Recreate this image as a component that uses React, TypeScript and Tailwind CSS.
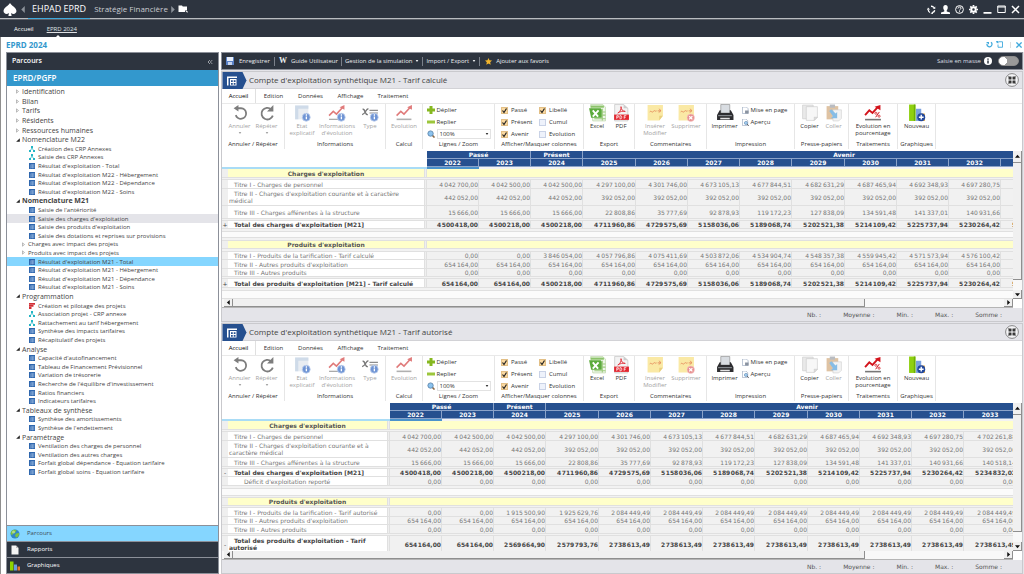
import React from 'react';
import { ChevronsLeft } from 'lucide-react';

type TreeRow = { label: string; kind: 'closed' | 'open' | 'table' | 'nodes' | 'chart' | 'sub'; tone?: 'bold' | 'hover' | 'active' };

const tree: TreeRow[] = [
  { label: 'Identification', kind: 'closed' },
  { label: 'Bilan', kind: 'closed' },
  { label: 'Tarifs', kind: 'closed' },
  { label: 'Résidents', kind: 'closed' },
  { label: 'Ressources humaines', kind: 'closed' },
  { label: 'Nomenclature M22', kind: 'open' },
  { label: 'Création des CRP Annexes', kind: 'nodes' },
  { label: 'Saisie des CRP Annexes', kind: 'nodes' },
  { label: "Résultat d'exploitation - Total", kind: 'table' },
  { label: "Résultat d'exploitation M22 - Hébergement", kind: 'table' },
  { label: "Résultat d'exploitation M22 - Dépendance", kind: 'table' },
  { label: "Résultat d'exploitation M22 - Soins", kind: 'table' },
  { label: 'Nomenclature M21', kind: 'open', tone: 'bold' },
  { label: "Saisie de l'antériorité", kind: 'table' },
  { label: "Saisie des charges d'exploitation", kind: 'table', tone: 'hover' },
  { label: "Saisie des produits d'exploitation", kind: 'table' },
  { label: 'Saisie des dotations et reprises sur provisions', kind: 'table' },
  { label: 'Charges avec impact des projets', kind: 'sub' },
  { label: 'Produits avec impact des projets', kind: 'sub' },
  { label: "Résultat d'exploitation M21 - Total", kind: 'table', tone: 'active' },
  { label: "Résultat d'exploitation M21 - Hébergement", kind: 'table' },
  { label: "Résultat d'exploitation M21 - Dépendance", kind: 'table' },
  { label: "Résultat d'exploitation M21 - Soins", kind: 'table' },
  { label: 'Programmation', kind: 'open' },
  { label: 'Création et pilotage des projets', kind: 'chart' },
  { label: 'Association projet - CRP annexe', kind: 'nodes' },
  { label: 'Rattachement au tarif hébergement', kind: 'nodes' },
  { label: 'Synthèse des impacts tarifaires', kind: 'table' },
  { label: 'Récapitulatif des projets', kind: 'table' },
  { label: 'Analyse', kind: 'open' },
  { label: "Capacité d'autofinancement", kind: 'table' },
  { label: 'Tableau de Financement Prévisionnel', kind: 'table' },
  { label: 'Variation de trésorerie', kind: 'table' },
  { label: "Recherche de l'équilibre d'investissement", kind: 'table' },
  { label: 'Ratios financiers', kind: 'table' },
  { label: 'Indicateurs tarifaires', kind: 'table' },
  { label: 'Tableaux de synthèse', kind: 'open' },
  { label: 'Synthèse des amortissements', kind: 'table' },
  { label: "Synthèse de l'endettement", kind: 'table' },
  { label: 'Paramétrage', kind: 'open' },
  { label: 'Ventilation des charges de personnel', kind: 'table' },
  { label: 'Ventilation des autres charges', kind: 'table' },
  { label: 'Forfait global dépendance - Equation tarifaire', kind: 'table' },
  { label: 'Forfait global soins - Equation tarifaire', kind: 'table' },
];

function TreeIcon({ kind }: { kind: TreeRow['kind'] }) {
  if (kind === 'closed' || kind === 'sub')
    return (
      <svg viewBox="0 0 4 6" className="h-[5px] w-[3px]" fill="none" stroke="#8a8a8a" strokeWidth="0.8">
        <path d="M.6.8 3.3 3 .6 5.2z" />
      </svg>
    );
  if (kind === 'open')
    return (
      <svg viewBox="0 0 5 5" className="h-1 w-1">
        <path d="M4.8.3v4.4H.2z" fill="#222" />
      </svg>
    );
  if (kind === 'nodes')
    return (
      <svg viewBox="0 0 12 12" className="h-[6px] w-[6px]" fill="#23b5c4">
        <path d="M4 0h4v4H4zM0 8h4v4H0zM8 8h4v4H8zM5.3 4h1.4l2.6 4H8L6 5.5 4 8H2.700z" />
      </svg>
    );
  if (kind === 'chart')
    return (
      <svg viewBox="0 0 12 12" className="h-[6px] w-[6px]" fill="#d22f36">
        <path d="M0 0h12v3.500H0zM0 4h9v3.500H0zM0 8h5v4H0z" />
      </svg>
    );
  return (
    <svg viewBox="0 0 12 12" className="h-[6px] w-[6px]">
      <path d="M0 0h12v12H0z" fill="#2f67ae" />
      <path d="M4 3.500h7M4 6h7M4 8.500h7M3.500 3v8M7.500 3v8" stroke="#b9d2ef" strokeWidth="0.9" />
    </svg>
  );
}

function Sidebar() {
  return (
    <aside className="flex w-[213px] shrink-0 flex-col border border-[#8c9099] bg-white">
      <div className="flex h-[17px] shrink-0 items-center justify-between bg-[#2d343f] pl-[5px] pr-1 text-[7px] font-semibold text-white">
        Parcours
        <button aria-label="Réduire le panneau" className="text-[#d5d8dc]">
          <ChevronsLeft size={8} strokeWidth={2} />
        </button>
      </div>
      <h2 className="flex h-4 shrink-0 items-center bg-[#3398cd] pl-[6px] text-[8px] font-semibold text-white">EPRD/PGFP</h2>
      <nav className="min-h-0 flex-1 overflow-hidden pt-px">
        <ul className="flex h-[389px] flex-col">
          {tree.map((r) => {
            const leaf = r.kind === 'table' || r.kind === 'nodes' || r.kind === 'chart';
            const pad = leaf ? 'flex-[9] pl-[22px] text-[6px]' : r.kind === 'sub' ? 'flex-[9] pl-[15px] text-[6px]' : 'flex-[10] pl-[9px] text-[7px]';
            const tone =
              r.tone === 'active' ? 'bg-[#85d6ff]' : r.tone === 'hover' ? 'bg-[#e4e4e9]' : r.tone === 'bold' ? 'font-bold text-[#222]' : '';
            return (
              <li key={r.label} className={`flex min-h-0 items-center text-[#444] ${pad} ${tone}`}>
                <button className="flex items-center leading-none whitespace-nowrap">
                  <span className={leaf ? 'w-[9px]' : 'w-[6px]'}>
                    <TreeIcon kind={r.kind} />
                  </span>
                  {r.label}
                </button>
              </li>
            );
          })}
        </ul>
      </nav>
      <div className="flex shrink-0 flex-col text-[6px] text-white">
        <button className="flex h-4 items-center gap-[7px] border-t border-[#8c9099] bg-[#85d6ff] pl-[3px] text-[#3c4a55]">
          <svg viewBox="0 0 20 20" className="h-[10px] w-[10px]">
            <circle cx="10" cy="10" r="9" fill="#2f86c9" />
            <path d="M3 4c4-4 9-3 10-1l-3 5-4 1-2 4-3-4zM12 9l6-1c1 5-3 9-6 9l-2-4z" fill="#7cc142" />
            <circle cx="7" cy="6" r="3" fill="#fff" opacity=".4" />
          </svg>
          Parcours
        </button>
        <button className="flex h-4 items-center gap-[7px] border-t border-[#8c9099] bg-[#2d343f] pl-[3px]">
          <svg viewBox="0 0 20 20" className="h-[10px] w-[10px]">
            <path d="M3 1h9l5 5v13H3z" fill="#f4f4f4" />
            <path d="M12 1v5h5z" fill="#bbb" />
          </svg>
          Rapports
        </button>
        <button className="flex h-4 items-center gap-[7px] border-t border-[#8c9099] bg-[#2d343f] pl-[3px]">
          <svg viewBox="0 0 20 20" className="h-[10px] w-[10px]">
            <path d="M0 1h7v18H0z" fill="#8fd400" />
            <path d="M8 7h6v12H8z" fill="#6a9be0" />
            <path d="M15 11h5v8h-5z" fill="#e8762c" />
          </svg>
          Graphiques
        </button>
      </div>
    </aside>
  );
}

function TitleBar() {
  return (
    <header className="shrink-0 bg-[#2d343f] text-white">
      <div className="flex h-[19px] items-center border-b border-[#b9bcc0] px-[3px]">
        <svg viewBox="0 0 26 24" className="h-[13px] w-[14px]" fill="#fff">
          <path d="M13 0c3 5 12 9 12 15 0 5-6 7-10 3.500L16 24h-6l1-5.500C7 22 1 20 1 15 1 9 10 5 13 0z" />
        </svg>
        <svg viewBox="0 0 4 8" className="ml-1 h-[7px] w-1" fill="#8d939b">
          <path d="M4 0v8L0 4z" />
        </svg>
        <div className="ml-[3px] flex h-[19px] items-center border-b border-[#3fa9dc] px-1 text-[9px]">EHPAD EPRD</div>
        <span className="ml-1 text-[8px] text-[#c9ccd1]">Stratégie Financière</span>
        <svg viewBox="0 0 4 8" className="ml-[3px] h-[7px] w-1" fill="#8d939b">
          <path d="M0 0v8l4-4z" />
        </svg>
        <button aria-label="Dossiers" className="ml-[3px]">
          <svg viewBox="0 0 18 16" className="h-2 w-[10px]" fill="#fff">
            <path d="M0 1h7l1.500 2H17v8h-4v3H0z" />
            <path d="M14 12h4v4z" />
          </svg>
        </button>
        <div className="ml-auto flex items-center gap-[5px] pr-px">
          <button aria-label="Synchroniser">
            <svg viewBox="0 0 18 18" className="h-[9px] w-[9px]" fill="none" stroke="#fff" strokeWidth="2.600">
              <path d="M8 2.500a6.500 6.500 0 0 1 6 3M15.500 10.500a6.500 6.500 0 0 1-4 4.500M6 15A6.500 6.500 0 0 1 2.500 10" />
              <path d="M0 10l2-5 4 4zM16.500 3v5l-5-1zM7 17l5-4 0 5z" fill="#fff" stroke="none" />
            </svg>
          </button>
          <button aria-label="Utilisateur">
            <svg viewBox="0 0 18 18" className="h-[9px] w-[9px]" fill="#fff">
              <path d="M9 0c3 0 4.500 2 4.500 5s-1 4-2 5.500V13l6.500 2v3H0v-3l6.500-2v-2.500C5.500 9 4.500 8 4.500 5S6 0 9 0z" />
            </svg>
          </button>
          <button aria-label="Aide">
            <svg viewBox="0 0 18 18" className="h-[9px] w-[9px]" fill="none" stroke="#fff" strokeWidth="2">
              <circle cx="9" cy="9" r="7.800" />
              <path d="M6 7c0-4 6-4 6-.5 0 2-3 2-3 4.500M9 12.500v2" />
            </svg>
          </button>
          <button aria-label="Paramètres">
            <svg viewBox="0 0 18 18" className="h-[9px] w-[9px]" fill="none" stroke="#fff">
              <circle cx="9" cy="9" r="4.500" strokeWidth="4" />
              <path d="M9 0v3M9 15v3M0 9h3M15 9h3M2.600 2.600l2 2M13.400 13.400l2 2M2.600 15.400l2-2M13.400 4.600l2-2" strokeWidth="3.400" />
            </svg>
          </button>
          <button aria-label="Réduire">
            <svg viewBox="0 0 18 18" className="h-[9px] w-[9px]">
              <path d="M1 14h16v3.500H1z" fill="#fff" />
            </svg>
          </button>
          <button aria-label="Agrandir">
            <svg viewBox="0 0 18 18" className="h-[9px] w-[9px]" fill="none" stroke="#fff" strokeWidth="2">
              <path d="M1.500 2h15v13h-15zM1 4h16" />
            </svg>
          </button>
          <button aria-label="Fermer">
            <svg viewBox="0 0 18 18" className="h-[9px] w-[9px]" stroke="#fff" strokeWidth="3">
              <path d="M2 2l14 14M16 2 2 16" />
            </svg>
          </button>
        </div>
      </div>
      <nav className="flex h-[18px] gap-[13px] border-t border-[#5b6068] pl-[14px] text-[6px]">
        <a href="#accueil" className="pt-1 leading-[11px]">Accueil</a>
        <a href="#eprd" className="flex flex-col items-center justify-between pt-1 leading-[11px] text-[#dfe1e4] underline">
          EPRD 2024
          <svg viewBox="0 0 6 3" className="-ml-2 h-[2px] w-[6px]" fill="#fff">
            <path d="M0 3 3 0l3 3z" />
          </svg>
        </a>
      </nav>
    </header>
  );
}

function Caret() {
  return (
    <svg viewBox="0 0 4 3" className="h-[2px] w-1" fill="currentColor">
      <path d="M0 0h4L2 3z" />
    </svg>
  );
}

function Toolbar() {
  return (
    <div className="flex h-[18px] shrink-0 items-center border border-[#8c9099] bg-[#2d343f] pl-1 pr-[3px] text-[6px] text-[#eceef0]">
      <button className="flex items-center gap-[5px] pr-1">
        <svg viewBox="0 0 16 16" className="h-2 w-2">
          <path d="M0 0h16v16H0z" fill="#5b83c8" />
          <path d="M2 0h12v8H2z" fill="#e8effa" />
          <path d="M4 10h8v6H4z" fill="#c6d4ee" />
        </svg>
        Enregistrer
      </button>
      <button className="flex items-center gap-1 border-l border-[#7a808a] pr-[3px] pl-1">
        <span className="font-['Liberation_Serif',serif] text-[8px] leading-none font-bold">W</span>
        Guide Utilisateur
      </button>
      <button className="flex items-center gap-[3px] border-l border-[#7a808a] px-[3px]">
        Gestion de la simulation <Caret />
      </button>
      <button className="flex items-center gap-[3px] border-l border-[#7a808a] px-[3px]">
        Import / Export <Caret />
      </button>
      <button className="flex items-center gap-[4px] border-l border-[#7a808a] pl-[5px]">
        <svg viewBox="0 0 20 20" className="h-[7px] w-[7px]" fill="#f3b52c">
          <path d="M10 0l3 6.500 7 .8-5.200 4.700L16.300 19 10 15.500 3.700 19l1.500-7L0 7.300l7-.8z" />
        </svg>
        Ajouter aux favoris
      </button>
      <label className="ml-auto flex items-center gap-[3px] text-[#dcdee1]">
        Saisie en masse
        <svg viewBox="0 0 16 16" className="h-2 w-2">
          <circle cx="8" cy="8" r="8" fill="#fff" />
          <path d="M6.500 7h3v6h-3zM6.500 3h3v2.500h-3z" fill="#2d343f" />
        </svg>
        <input
          type="checkbox"
          role="switch"
          className="ml-[3px] h-[10px] w-[21px] appearance-none rounded-full border border-[#8d8d8d] bg-[radial-gradient(circle_at_4px_4px,#fff_4px,#9a9a9a_4px)]"
        />
      </label>
    </div>
  );
}

function InfoDot() {
  return (
    <g>
      <circle cx="25" cy="25" r="7.500" fill="#6f94d4" stroke="#c2d3ee" strokeWidth="1.500" />
      <path d="M24 23.500h2.500V29H24zM24 19.500h2.500V22H24z" fill="#fff" />
    </g>
  );
}

function RibbonIcon({ name }: { name: string }) {
  const cls = 'h-[18px] w-[18px]';
  switch (name) {
    case 'undo':
      return (
        <svg viewBox="0 0 34 34" className={cls} fill="none" stroke="#7d7d7d" strokeWidth="3.400">
          <path d="M10 8h9a10 10 0 1 1-10 13" />
          <path d="M14 2v12L5 8z" fill="#7d7d7d" stroke="none" />
        </svg>
      );
    case 'redo':
      return (
        <svg viewBox="0 0 34 34" className={cls} fill="none" stroke="#7d7d7d" strokeWidth="3.400">
          <path d="M25 10a11 11 0 1 0 3 12" />
          <path d="M29 2v12H17z" fill="#7d7d7d" stroke="none" />
        </svg>
      );
    case 'state':
      return (
        <svg viewBox="0 0 34 34" className={cls}>
          <path d="M4 3h25v26H4z" fill="#e9edf2" />
          <path d="M4 3h25v6H4zM4 9h6v20H4z" fill="#cfdbe9" />
          <InfoDot />
        </svg>
      );
    case 'trendInfo':
      return (
        <svg viewBox="0 0 34 34" className={cls}>
          <path d="M2 29h20" stroke="#aaa" strokeWidth="2.500" />
          <path d="M2 22l8-8 6 5L27 7" fill="none" stroke="#e07b7b" strokeWidth="3" />
          <path d="M31 2v9l-9-5z" fill="#e07b7b" />
          <InfoDot />
        </svg>
      );
    case 'type':
      return (
        <svg viewBox="0 0 34 34" className={cls}>
          <path d="M3 10c5-2 4 12 10 10M14 9C9 9 8 20 2 20" fill="none" stroke="#777" strokeWidth="2.600" />
          <path d="M16 12h16M16 17h16" stroke="#8c8c8c" strokeWidth="2" />
          <InfoDot />
        </svg>
      );
    case 'trend':
      return (
        <svg viewBox="0 0 34 34" className={cls}>
          <path d="M3 29h28" stroke="#b0b0b0" strokeWidth="3" />
          <path d="M3 22l8-8 6 5L28 7" fill="none" stroke="#e07b7b" strokeWidth="3" />
          <path d="M32 2v9l-9-5z" fill="#e07b7b" />
        </svg>
      );
    case 'excel':
      return (
        <svg viewBox="0 0 34 34" className={cls}>
          <path d="M5 1h23l5 5v26H9z" fill="#eef6e8" stroke="#a9cc90" />
          <path d="M5 3h25v4H5z" fill="#8cc36a" />
          <path d="M27 9v22M27 15h6M27 21h6M12 28h21" stroke="#9cca7c" strokeWidth="2" />
          <path d="M2 8h22l2 3v15H6z" fill="#5cab3c" />
          <path d="M9 12l10 12M20 12 9 24" stroke="#fff" strokeWidth="3.600" />
        </svg>
      );
    case 'pdf':
      return (
        <svg viewBox="0 0 34 34" className={cls}>
          <path d="M5 1h17l8 7v24H5z" fill="#f3f3f3" stroke="#b5b5b5" />
          <path d="M22 1v7h8z" fill="#ccc" />
          <path d="M11 17c5-3 7-8 6-12 0 5 3 9 8 9-5-1-9 0-14 3z" fill="none" stroke="#e2343c" strokeWidth="1.800" />
          <path d="M4 20h28v10H4z" fill="#e2262f" />
          <path d="M9 28v-6h3v3H9M15 22v6h2c2 0 2-6 0-6zM27 22h-4v6M23 25h3" fill="none" stroke="#fff" strokeWidth="1.400" />
        </svg>
      );
    case 'note':
    case 'noteDelete':
      return (
        <svg viewBox="0 0 34 34" className={cls}>
          <path d="M3 2h29v20l-7 9H3z" fill="#fae9a5" />
          <path d="M25 31v-9h7z" fill="#e8cf7e" />
          <path d="M7 15c3-4 4 3 7-1s4 2 6-1M22 13h6M25 9l3 4-4 3" fill="none" stroke="#e5905f" strokeWidth="1.800" />
          {name === 'noteDelete' && (
            <g>
              <circle cx="26" cy="26" r="7" fill="#e89090" stroke="#f6cccc" />
              <path d="M23 23l6 6M29 23l-6 6" stroke="#fff" strokeWidth="2.400" />
            </g>
          )}
        </svg>
      );
    case 'print':
      return (
        <svg viewBox="0 0 34 34" className={cls}>
          <path d="M9 1h17v16H9z" fill="#d9dde2" stroke="#777" />
          <path d="M7 12h2v5h17v-5h2l5 9v9H2v-9z" fill="#2d2d30" />
          <path d="M4 21h26v2H4z" fill="#8f9499" />
          <path d="M8 26h18v3H8z" fill="#e3e3e3" />
        </svg>
      );
    case 'copy':
      return (
        <svg viewBox="0 0 34 34" className={cls} stroke="#c4c4c4">
          <path d="M3 2h20v26H3z" fill="#e9e9e9" />
          <path d="M10 5h21v20l-6 6H10z" fill="#f7f7f7" />
          <path d="M25 31v-6h6z" fill="#ddd" />
        </svg>
      );
    case 'paste':
      return (
        <svg viewBox="0 0 34 34" className={cls}>
          <path d="M3 4h22v25H3z" fill="#dfc3a3" />
          <path d="M9 1h10v6H9z" fill="#b9bcc1" />
          <path d="M15 11h16v16l-5 5H15z" fill="#f3f3f3" stroke="#c9c9c9" />
          <path d="M8 13l4-3 8 8 3-3v12H11l4-4z" fill="#87bde6" />
        </svg>
      );
    case 'percent':
      return (
        <svg viewBox="0 0 34 34" className={cls}>
          <path d="M2 28h30v3H2z" fill="#777" />
          <path d="M2 21l8-9 6 5L26 6" fill="none" stroke="#d3141c" strokeWidth="3.600" />
          <path d="M31 2v10L20 5z" fill="#d3141c" />
          <path d="M29 15l-7 10" stroke="#d3141c" strokeWidth="1.800" />
          <circle cx="22.500" cy="17.500" r="2" fill="none" stroke="#d3141c" strokeWidth="1.400" />
          <circle cx="28.500" cy="23" r="2" fill="none" stroke="#d3141c" strokeWidth="1.400" />
        </svg>
      );
    default:
      return (
        <svg viewBox="0 0 34 34" className={cls}>
          <path d="M2 1h12v31H2z" fill="#8fd010" />
          <path d="M11 1h3v31h-3z" fill="#6cae08" />
          <path d="M15 9h10v23H15z" fill="#7ba2e0" />
          <path d="M26 18h6v14h-6z" fill="#f0b040" />
          <circle cx="25" cy="25" r="7.500" fill="#22489c" />
          <path d="M25 20.500v9M20.500 25h9" stroke="#fff" strokeWidth="2.600" />
        </svg>
      );
  }
}

function BigButton({ icon, label, disabled, wide, caret }: { icon: string; label: string; disabled?: boolean; wide: string; caret?: boolean }) {
  return (
    <button disabled={disabled} className={`flex flex-col items-center justify-start ${wide} ${disabled ? 'text-[#a3a3a3]' : 'text-[#333]'}`}>
      <RibbonIcon name={icon} />
      <span className="mt-px leading-[7px] whitespace-pre-line">{label}</span>
      {caret && <span className="mt-[2px]"><Caret /></span>}
    </button>
  );
}

function Group({ title, width, children }: { title: string; width: string; children: React.ReactNode }) {
  return (
    <section className={`flex shrink-0 flex-col border-r border-[#e6e6e6] ${width}`}>
      <div className="flex flex-1 justify-center">{children}</div>
      <h3 className="text-center leading-[9px] whitespace-nowrap text-[#333]">{title}</h3>
    </section>
  );
}

function Check({ label, on }: { label: string; on?: boolean }) {
  return (
    <label className="flex h-3 items-center gap-[3px]">
      <span className="grid">
        <input
          type="checkbox"
          defaultChecked={on}
          className="col-start-1 row-start-1 h-[7px] w-[7px] appearance-none border border-[#c9d2e6] bg-[#eef2fb] checked:border-[#e2bf86] checked:bg-[#fbd9a0]"
        />
        {on && (
          <svg viewBox="0 0 14 14" className="pointer-events-none col-start-1 row-start-1 h-[7px] w-[7px]" fill="none" stroke="#222" strokeWidth="2.400">
            <path d="M3 7l3 4 5-8" />
          </svg>
        )}
      </span>
      {label}
    </label>
  );
}

function Ribbon() {
  return (
    <div className="flex h-[48px] shrink-0 border-t border-[#e9e9e9] bg-white pb-[2px] text-[6px] text-[#333]">
      <Group title="Annuler / Répéter" width="w-[63px]">
        <BigButton icon="undo" label="Annuler" disabled caret wide="w-[27px]" />
        <BigButton icon="redo" label="Répéter" disabled caret wide="w-[27px]" />
      </Group>
      <Group title="Informations" width="w-[101px]">
        <BigButton icon="state" label={'Etat\nexplicatif'} disabled wide="w-[30px]" />
        <BigButton icon="trendInfo" label={"Informations\nd'évolution"} disabled wide="w-[40px]" />
        <BigButton icon="type" label="Type" disabled wide="w-[26px]" />
      </Group>
      <Group title="Calcul" width="w-[37px]">
        <BigButton icon="trend" label="Evolution" disabled wide="w-[32px]" />
      </Group>
      <Group title="Lignes / Zoom" width="w-[72px]">
        <div className="flex w-[64px] flex-col">
          <button className="flex h-3 items-center gap-[2px]">
            <svg viewBox="0 0 16 16" className="h-2 w-2">
              <path d="M5 0h6v5h5v6h-5v5H5v-5H0V5h5z" fill="#86b820" />
            </svg>
            Déplier
          </button>
          <button className="flex h-3 items-center gap-[2px]">
            <svg viewBox="0 0 16 16" className="h-2 w-2">
              <path d="M0 5h16v6H0z" fill="#9cc63c" />
            </svg>
            Replier
          </button>
          <label className="flex h-3 items-center gap-[2px]">
            <svg viewBox="0 0 18 18" className="h-2 w-2 shrink-0">
              <path d="M11 11l6 6" stroke="#8a6a4a" strokeWidth="3.500" />
              <circle cx="8" cy="8" r="6" fill="#8cc3ee" stroke="#5d86ad" strokeWidth="2" />
            </svg>
            <span className="grid flex-1 items-center">
              <select aria-label="Zoom" className="col-start-1 row-start-1 h-[10px] w-full appearance-none border border-[#e2e2e2] bg-white pl-[2px] leading-none">
                <option>100%</option>
              </select>
              <span className="pointer-events-none col-start-1 row-start-1 justify-self-end pr-[2px]">
                <Caret />
              </span>
            </span>
          </label>
        </div>
      </Group>
      <Group title="Afficher/Masquer colonnes" width="w-[89px]">
        <div className="grid w-[76px] grid-cols-2 content-start">
          <Check label="Passé" on />
          <Check label="Libellé" on />
          <Check label="Présent" on />
          <Check label="Cumul" />
          <Check label="Avenir" on />
          <Check label="Evolution" />
        </div>
      </Group>
      <Group title="Export" width="w-[51px]">
        <BigButton icon="excel" label="Excel" wide="w-[24px]" />
        <BigButton icon="pdf" label="PDF" wide="w-[24px]" />
      </Group>
      <Group title="Commentaires" width="w-[72px]">
        <BigButton icon="note" label={'Insérer\nModifier'} disabled wide="w-[31px]" />
        <BigButton icon="noteDelete" label="Supprimer" disabled wide="w-[31px]" />
      </Group>
      <Group title="Impression" width="w-[88px]">
        <BigButton icon="print" label="Imprimer" wide="w-[30px]" />
        <div className="flex w-[52px] flex-col pl-[2px]">
          <button className="flex h-3 items-center gap-[2px] whitespace-nowrap">
            <svg viewBox="0 0 16 16" className="h-[7px] w-[7px] shrink-0">
              <path d="M1 0h9l4 4v11H1z" fill="#fff" stroke="#8f9fb8" strokeWidth="1.400" />
              <path d="M7 8h8v7H7z" fill="#8a93a0" />
            </svg>
            Mise en page
          </button>
          <button className="flex h-3 items-center gap-[2px]">
            <svg viewBox="0 0 16 16" className="h-[7px] w-[7px] shrink-0">
              <path d="M1 0h8l4 4v11H1z" fill="#fff" stroke="#8f9fb8" strokeWidth="1.400" />
              <circle cx="9" cy="9" r="3.500" fill="#a9d4f5" stroke="#5580ad" strokeWidth="1.400" />
              <path d="M11.500 11.500 15.500 15.500" stroke="#555" strokeWidth="2" />
            </svg>
            Aperçu
          </button>
        </div>
      </Group>
      <Group title="Presse-papiers" width="w-[54px]">
        <BigButton icon="copy" label="Copier" wide="w-[24px]" />
        <BigButton icon="paste" label="Coller" disabled wide="w-[24px]" />
      </Group>
      <Group title="Traitements" width="w-[49px]">
        <BigButton icon="percent" label={'Evolution en\npourcentage'} wide="w-[44px]" />
      </Group>
      <Group title="Graphiques" width="w-[38px]">
        <BigButton icon="new" label="Nouveau" wide="w-[32px]" />
      </Group>
    </div>
  );
}

type Row = { h: string; kind: 'head' | 'gap' | 'blank' | 'line' | 'total' | 'sub'; label?: string; mark?: string; values?: string[] };

const years = ['2022', '2023', '2024', '2025', '2026', '2027', '2028', '2029', '2030', '2031', '2032', '2033'];
const repeat = (v: string, n: number) => Array.from({ length: n }, () => v);

const staff = ['4 042 700,00', '4 042 500,00', '4 042 500,00', '4 297 100,00', '4 301 746,00', '4 673 105,13', '4 677 844,51', '4 682 631,29', '4 687 465,94', '4 692 348,93', '4 697 280,75', '4 702 261,88'];
const medical = [...repeat('442 052,00', 3), ...repeat('392 052,00', 9)];
const structure = ['15 666,00', '15 666,00', '15 666,00', '22 808,86', '35 777,69', '92 878,93', '119 172,23', '127 838,09', '134 591,48', '141 337,01', '140 931,66', '140 518,14'];
const totals = ['4 500 418,00', '4 500 218,00', '4 500 218,00', '4 711 960,86', '4 729 575,69', '5 158 036,06', '5 189 068,74', '5 202 521,38', '5 214 109,42', '5 225 737,94', '5 230 264,42', '5 234 832,02'];
const computed = ['0,00', '0,00', '3 846 054,00', '4 057 796,86', '4 075 411,69', '4 503 872,06', '4 534 904,74', '4 548 357,38', '4 559 945,42', '4 571 573,94', '4 576 100,42', '4 580 668,02'];
const others = repeat('654 164,00', 12);
const zeros = repeat('0,00', 12);

const calcRows: Row[] = [
  { h: 'h-[9px]', kind: 'head', label: "Charges d'exploitation" },
  { h: 'h-[2px]', kind: 'gap' },
  { h: 'h-[9px]', kind: 'line', label: 'Titre I - Charges de personnel', values: staff },
  { h: 'h-[17px]', kind: 'line', label: "Titre II - Charges d'exploitation courante et à caractère médical", values: medical },
  { h: 'h-[13px]', kind: 'line', label: 'Titre III - Charges afférentes à la structure', values: structure },
  { h: 'h-[2px]', kind: 'gap' },
  { h: 'h-[8px]', kind: 'total', mark: '+', label: "Total des charges d'exploitation [M21]", values: totals },
  { h: 'h-[3px]', kind: 'gap' },
  { h: 'h-[6px]', kind: 'blank' },
  { h: 'h-[3px]', kind: 'gap' },
  { h: 'h-[8px]', kind: 'head', label: "Produits d'exploitation" },
  { h: 'h-[3px]', kind: 'gap' },
  { h: 'h-[8px]', kind: 'line', label: 'Titre I - Produits de la tarification - Tarif calculé', values: computed },
  { h: 'h-[9px]', kind: 'line', label: "Titre II - Autres produits d'exploitation", values: others },
  { h: 'h-[8px]', kind: 'line', label: 'Titre III - Autres produits', values: zeros },
  { h: 'h-[2px]', kind: 'gap' },
  { h: 'h-[9px]', kind: 'total', mark: '+', label: "Total des produits d'exploitation [M21] - Tarif calculé", values: ['654 164,00', '654 164,00', ...totals.slice(2)] },
  { h: 'h-[3px]', kind: 'gap' },
  { h: 'h-[8px]', kind: 'blank' },
];

const authRows: Row[] = [
  { h: 'h-[9px]', kind: 'head', label: "Charges d'exploitation" },
  { h: 'h-[2px]', kind: 'gap' },
  { h: 'h-[9px]', kind: 'line', label: 'Titre I - Charges de personnel', values: staff },
  { h: 'h-[17px]', kind: 'line', label: "Titre II - Charges d'exploitation courante et à caractère médical", values: medical },
  { h: 'h-[9px]', kind: 'line', label: 'Titre III - Charges afférentes à la structure', values: structure },
  { h: 'h-[2px]', kind: 'gap' },
  { h: 'h-[8px]', kind: 'total', mark: '-', label: "Total des charges d'exploitation [M21]", values: totals },
  { h: 'h-[9px]', kind: 'sub', label: "Déficit d'exploitation reporté", values: zeros },
  { h: 'h-[3px]', kind: 'gap' },
  { h: 'h-[7px]', kind: 'blank' },
  { h: 'h-[2px]', kind: 'gap' },
  { h: 'h-[8px]', kind: 'head', label: "Produits d'exploitation" },
  { h: 'h-[2px]', kind: 'gap' },
  { h: 'h-[9px]', kind: 'line', label: 'Titre I - Produits de la tarification - Tarif autorisé', values: ['0,00', '0,00', '1 915 500,90', '1 925 629,76', ...repeat('2 084 449,49', 8)] },
  { h: 'h-[8px]', kind: 'line', label: "Titre II - Autres produits d'exploitation", values: others },
  { h: 'h-[9px]', kind: 'line', label: 'Titre III - Autres produits', values: zeros },
  { h: 'h-[2px]', kind: 'gap' },
  { h: 'h-[17px]', kind: 'total', mark: '-', label: "Total des produits d'exploitation - Tarif autorisé", values: ['654 164,00', '654 164,00', '2 569 664,90', '2 579 793,76', ...repeat('2 738 613,49', 8)] },
];

function DataTable({ rows, labelCol, tableWidth, title }: { rows: Row[]; labelCol: string; tableWidth: string; title: string }) {
  const head = 'border-r border-b border-[#8ba3c9] bg-[#26508f] p-0 font-bold text-white';
  return (
    <table aria-label={title} className={`table-fixed border-separate border-spacing-0 text-[6px] leading-[7px] ${tableWidth}`}>
      <colgroup>
        <col className="w-[6px]" />
        <col className={labelCol} />
        <col className="w-[3px]" />
        {years.map((y, i) => (
          <col key={y} className={i % 4 === 3 ? 'w-[53px]' : 'w-[52px]'} />
        ))}
        <col className="w-[52px]" />
      </colgroup>
      <thead>
        <tr className="h-[8px]">
          <td colSpan={3} rowSpan={2} className="bg-white p-0" />
          <th colSpan={2} className={head}>Passé</th>
          <th className={head}>Présent</th>
          <th colSpan={10} className={head}>Avenir</th>
        </tr>
        <tr className="h-[8px]">
          {years.map((y) => (
            <th key={y} className={head}>{y}</th>
          ))}
          <td className={head} />
        </tr>
        <tr className="h-[2px]">
          <td colSpan={3} className="bg-[#a9dcf6] p-0" />
          <td className="bg-[#4b93cc] p-0" />
          <td colSpan={12} className="bg-[#f3f3f3] p-0" />
        </tr>
      </thead>
      <tbody>
        {rows.map((r, i) => {
          const edge = 'border-b border-[#e0e0e0] p-0';
          if (r.kind === 'gap' || r.kind === 'blank')
            return (
              <tr key={i} className={r.h}>
                <td colSpan={16} className={`${edge} ${r.kind === 'blank' ? 'bg-[#fbfbfb]' : 'bg-[#f2f2f2]'}`} />
              </tr>
            );
          if (r.kind === 'head')
            return (
              <tr key={i} className={r.h}>
                <td className={`${edge} bg-[#efefef]`} />
                <th className={`${edge} bg-[#ffffca] text-center font-bold text-[#555]`}>{r.label}</th>
                <td className={`${edge} border-x bg-[#efefef]`} />
                <td colSpan={13} className={`${edge} bg-[#ffffca]`} />
              </tr>
            );
          const strong = r.kind === 'total';
          return (
            <tr key={i} className={`${r.h} ${strong ? 'font-bold text-[#444]' : 'text-[#777]'}`}>
              <td className={`${edge} bg-[#efefef] text-center font-normal`}>{r.mark}</td>
              <th
                scope="row"
                className={`${edge} bg-white pl-[1px] text-left ${strong ? 'font-bold' : 'pr-[6px] font-normal'} ${r.kind === 'sub' ? 'indent-[15px]' : 'indent-[5px]'}`}
              >
                {r.label}
              </th>
              <td className={`${edge} border-x bg-[#efefef]`} />
              {r.values!.map((v, j) => (
                <td key={j} className={`${edge} border-r bg-[#f1f1f1] text-right whitespace-nowrap`}>
                  {v.replace(/ /g, strong ? '\u200a' : '\u2009')}
                </td>
              ))}
              <td className={`${edge} bg-[#f1f1f1]`} />
            </tr>
          );
        })}
      </tbody>
    </table>
  );
}

function Arrow({ d }: { d: string }) {
  return (
    <svg viewBox="0 0 6 6" className="h-[5px] w-[5px]">
      <path d={d} fill="#111" />
    </svg>
  );
}

function Panel({ title, children }: { title: string; children: React.ReactNode }) {
  const key = 'border-r border-b border-[#8f8f8f] bg-[#f0f0f0] flex items-center justify-center';
  return (
    <section className="flex min-h-0 flex-1 flex-col border border-[#c9c9cd] bg-white">
      <div className="flex h-[17px] shrink-0 items-center border-b border-[#d2d2d6] bg-[#e4e4e9] pr-[3px] text-[8px] text-[#444]">
        <svg viewBox="0 0 48 34" className="mr-[2px] h-[17px] w-[25px]">
          <path d="M0 0h40l8 17-8 17H0z" fill="#26508f" />
          <path d="M9 9h20v3H12v15H9z" fill="#fff" />
          <path d="M15 14h13v13H15z" fill="#fff" />
          <path d="M17 16.500h3.500V20H17zM22.500 16.500H26V20h-3.500zM17 22h3.500v3.500H17zM22.500 22H26v3.500h-3.500z" fill="#26508f" />
        </svg>
        <h2>{title}</h2>
        <button aria-label="Plein écran" className="ml-auto">
          <svg viewBox="0 0 28 28" className="h-[14px] w-[14px]">
            <circle cx="14" cy="14" r="12.800" fill="#f4f4f6" stroke="#666" strokeWidth="1.500" />
            <path d="M12.500 7.500v5h-5v-2h1.500L6.500 8 8 6.500l2.500 2.500V7.500zM15.500 7.500v5h5v-2H19L21.500 8 20 6.500 17.500 9V7.500zM12.500 20.500v-5h-5v2H9L6.500 20 8 21.500l2.500-2.500v1.500zM15.500 20.500v-5h5v2H19l2.500 2.500-1.500 1.500-2.500-2.500v1.500z" fill="#333" stroke="#333" strokeWidth="0.8" />
          </svg>
        </button>
      </div>
      <div role="tablist" className="flex h-[14px] shrink-0 items-center bg-white text-[6px] text-[#333]">
        <button role="tab" aria-selected="true" className="h-full w-[34px] border-r border-[#e0e0e0] text-black">Accueil</button>
        <button role="tab" className="w-[35px]">Edition</button>
        <button role="tab" className="w-[39px]">Données</button>
        <button role="tab" className="w-[41px]">Affichage</button>
        <button role="tab" className="w-[44px]">Traitement</button>
      </div>
      <Ribbon />
      <div className="flex min-h-0 flex-1 font-['DejaVu_Sans',sans-serif]">
        <div className="flex min-w-0 flex-1 flex-col">
          <div className="min-h-0 flex-1 overflow-hidden">{children}</div>
          <div className="flex h-[9px] shrink-0 border-b border-[#b5b5b5] bg-[#f8f8f8]">
            <div className={`ml-[2px] w-[9px] ${key}`}><Arrow d="M4.500 0v6L1 3z" /></div>
            <div className="flex-[82] border-r border-b border-[#8f8f8f] bg-[#f0f0f0]" />
            <div className="flex-[18]" />
            <div className={`w-[9px] ${key}`}><Arrow d="M1.500 0v6L5 3z" /></div>
          </div>
        </div>
        <div className="mb-[9px] flex w-[9px] shrink-0 flex-col bg-[#f8f8f8]">
          <div className={`h-3 ${key}`}><Arrow d="M0 4.500h6L3 1z" /></div>
          <div className="flex-[92] border-r border-b border-[#8f8f8f] bg-[#f0f0f0]" />
          <div className="flex-[8]" />
          <div className={`h-[9px] ${key}`}><Arrow d="M0 1.500h6L3 5z" /></div>
        </div>
      </div>
      <footer className="flex h-[13px] shrink-0 items-center justify-end gap-[22px] bg-[#e4e4e9] pr-5 font-['DejaVu_Sans',sans-serif] text-[6px] text-[#555]">
        <span>Nb. :</span>
        <span>Moyenne :</span>
        <span>Min. :</span>
        <span>Max. :</span>
        <span>Somme :</span>
      </footer>
    </section>
  );
}

export default function App() {
  return (
    <div className="flex h-screen flex-col overflow-hidden bg-white font-['Open_Sans','Noto_Sans',sans-serif]">
      <TitleBar />
      <div className="flex min-h-0 flex-1 flex-col border-l border-[#8f8f8f] pl-[5px]">
        <div className="flex h-[15px] shrink-0 items-center">
          <h1 className="text-[8px] font-bold text-[#3398cd]">EPRD 2024</h1>
          <div className="ml-auto flex items-center gap-[3px] pr-[2px] text-[#3fa9dc]">
            <button aria-label="Actualiser">
              <svg viewBox="0 0 14 14" className="h-[7px] w-[7px]" fill="none" stroke="currentColor" strokeWidth="2.400">
                <path d="M10 2.500a5 5 0 1 1-8 3" />
                <path d="M0 2h6v5z" fill="currentColor" stroke="none" />
              </svg>
            </button>
            <button aria-label="Détacher">
              <svg viewBox="0 0 14 14" className="h-[7px] w-[7px]" fill="none" stroke="currentColor" strokeWidth="1.800">
                <path d="M6 1.500h7v11H4V7" />
                <path d="M0 0h5v5L3.500 3.500 2 5z" fill="currentColor" stroke="none" />
              </svg>
            </button>
            <button aria-label="Fermer l'onglet" className="ml-1 border-l border-[#ddd] pl-[5px]">
              <svg viewBox="0 0 14 14" className="h-[6px] w-[6px]" stroke="currentColor" strokeWidth="3">
                <path d="M1 1l12 12M13 1 1 13" />
              </svg>
            </button>
          </div>
        </div>
        <div className="flex min-h-0 flex-1 gap-[2px]">
          <Sidebar />
          <main className="flex min-w-0 flex-1 flex-col gap-px bg-[#e4e4e9] pr-[1px]">
            <Toolbar />
            <Panel title="Compte d'exploitation synthétique M21 - Tarif calculé">
              <DataTable rows={calcRows} labelCol="w-[196px]" tableWidth="w-[884px]" title="Tarif calculé" />
            </Panel>
            <Panel title="Compte d'exploitation synthétique M21 - Tarif autorisé">
              <DataTable rows={authRows} labelCol="w-[159px]" tableWidth="w-[847px]" title="Tarif autorisé" />
            </Panel>
          </main>
        </div>
      </div>
    </div>
  );
}
